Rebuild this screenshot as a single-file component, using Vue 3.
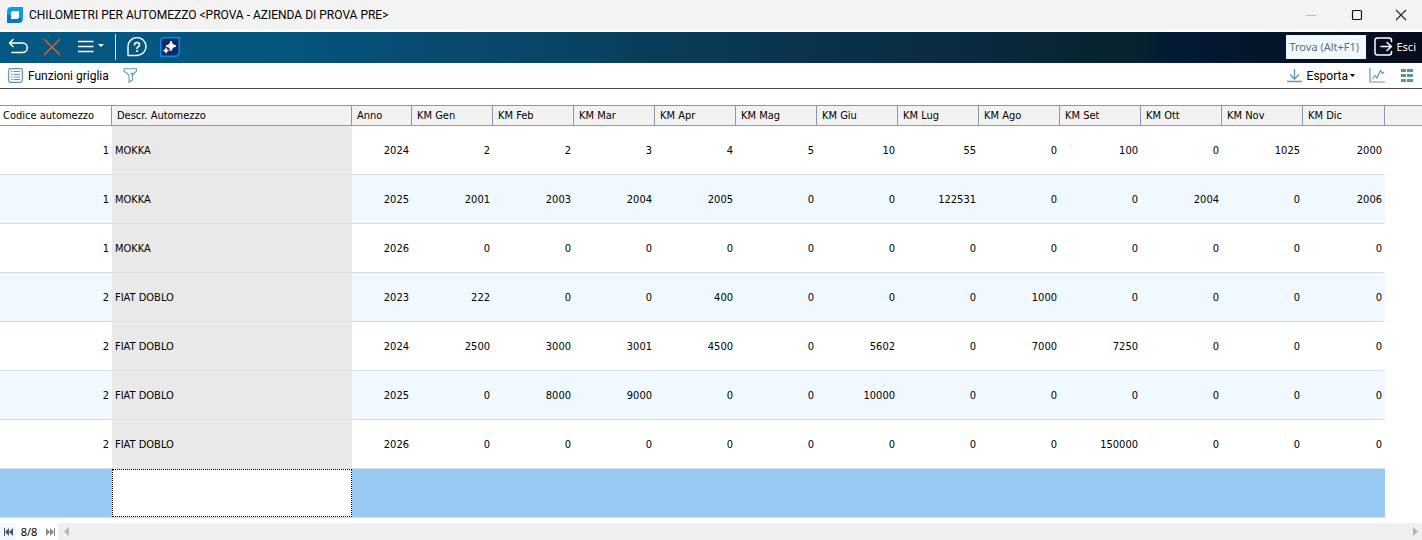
<script setup>
const months = ['Gen', 'Feb', 'Mar', 'Apr', 'Mag', 'Giu', 'Lug', 'Ago', 'Set', 'Ott', 'Nov', 'Dic']

const rows = [
  { code: 1, name: 'MOKKA', year: 2024, km: [2, 2, 3, 4, 5, 10, 55, 0, 100, 0, 1025, 2000] },
  { code: 1, name: 'MOKKA', year: 2025, km: [2001, 2003, 2004, 2005, 0, 0, 122531, 0, 0, 2004, 0, 2006] },
  { code: 1, name: 'MOKKA', year: 2026, km: [0, 0, 0, 0, 0, 0, 0, 0, 0, 0, 0, 0] },
  { code: 2, name: 'FIAT DOBLO', year: 2023, km: [222, 0, 0, 400, 0, 0, 0, 1000, 0, 0, 0, 0] },
  { code: 2, name: 'FIAT DOBLO', year: 2024, km: [2500, 3000, 3001, 4500, 0, 5602, 0, 7000, 7250, 0, 0, 0] },
  { code: 2, name: 'FIAT DOBLO', year: 2025, km: [0, 8000, 9000, 0, 0, 10000, 0, 0, 0, 0, 0, 0] },
  { code: 2, name: 'FIAT DOBLO', year: 2026, km: [0, 0, 0, 0, 0, 0, 0, 0, 150000, 0, 0, 0] },
]
</script>

<template>
  <div class="window">
    <header class="titlebar">
      <svg class="logo" width="16" height="16" viewBox="0 0 16 16" aria-hidden="true">
        <path d="M4 0H16V11Q16 16 11 16H0V5Q0 0 4 0Z" fill="#0d9fdc" />
        <path d="M0 8V16H11Q14 16 15.500 13L9 9Z" fill="#0877c4" />
        <path d="M6 4H12V9.500Q12 12 9.500 12H4V6.500Q4 4 6 4Z" fill="#fff" />
      </svg>
      <h1>CHILOMETRI PER AUTOMEZZO &lt;PROVA - AZIENDA DI PROVA PRE&gt;</h1>
      <button class="win" aria-label="Riduci a icona">
        <svg width="12" height="12" viewBox="0 0 12 12"><path d="M1 6.500H11" stroke="#bdbdbd" /></svg>
      </button>
      <button class="win" aria-label="Ingrandisci">
        <svg width="12" height="12" viewBox="0 0 12 12"><rect x="1.500" y="1.500" width="9" height="9" rx="1" fill="none" stroke="#111" stroke-width="1.200" /></svg>
      </button>
      <button class="win" aria-label="Chiudi">
        <svg width="12" height="12" viewBox="0 0 12 12"><path d="M1 1L11 11M11 1L1 11" stroke="#222" stroke-width="1.100" /></svg>
      </button>
    </header>

    <nav class="toolbar">
      <button aria-label="Annulla">
        <svg width="20" height="18" viewBox="0 0 20 18" fill="none" stroke="#fff" stroke-width="1.500" stroke-linecap="round" stroke-linejoin="round"><path d="M5 1.500L1.500 5L5 8.500M2 5H14.500A4.700 4.700 0 0 1 14.500 14.500H4" /></svg>
      </button>
      <button class="delete" aria-label="Elimina">
        <svg width="18" height="18" viewBox="0 0 18 18" fill="none" stroke="#d0632f" stroke-width="1.500"><path d="M1 1L17 17M17 1L1 17" /></svg>
      </button>
      <button class="menu" aria-label="Menu">
        <svg width="26" height="18" viewBox="0 0 26 18"><path d="M0 3.500H15.500M0 8.500H15.500M0 13.500H15.500" stroke="#fff" stroke-width="1.500" /><path d="M20 6H26L23 9Z" fill="#fff" /></svg>
      </button>
      <span class="divider"></span>
      <button class="help" aria-label="Aiuto">
        <svg width="20" height="20" viewBox="0 0 20 20" fill="none" stroke="#fff" stroke-width="1.400" stroke-linecap="round"><path d="M1 10A9 9 0 1 1 10 18.500H1.500Q1 18.500 1 18Z" /><path d="M7.500 8Q7.500 5.500 10 5.500T12.500 7.800Q12.500 9.300 11 9.900Q10 10.400 10 11.500" stroke-width="1.600" /><circle cx="10" cy="14" r=".6" fill="#fff" stroke-width=".8" /></svg>
      </button>
      <button class="assistant" aria-label="Assistente">
        <svg width="20" height="20" viewBox="0 0 20 20"><path d="M4.500 .8H19.200V15Q19.200 19.200 15 19.200H.8V5Q.8 .8 4.500 .8Z" fill="#0a2a6c" stroke="#0d8bdc" stroke-width="1.500" /><path d="M11 4Q11.600 8.400 16 9Q11.600 9.600 11 14Q10.400 9.600 6 9Q10.400 8.400 11 4Z" fill="#fff" stroke="#fff" stroke-width="1" /><path d="M6 10.500Q6.400 13.100 9 13.500Q6.400 13.900 6 16.500Q5.600 13.900 3 13.500Q5.600 13.100 6 10.500Z" fill="#fff" stroke="#fff" stroke-width=".4" /></svg>
      </button>
      <input class="search" type="text" placeholder="Trova (Alt+F1)" aria-label="Trova (Alt+F1)" />
      <button class="exit">
        <svg width="19" height="19" viewBox="0 0 19 19" fill="none" stroke="#fff" stroke-width="1.500" stroke-linecap="round" stroke-linejoin="round"><path d="M17.500 4.500V3.500Q17.500 1 15 1H3.500Q1 1 1 3.500V15.500Q1 18 3.500 18H15Q17.500 18 17.500 15.500V14.500M7 9.500H17.500M13 5.500L17.500 9.500L13 13.500" /></svg>
        Esci
      </button>
    </nav>

    <div class="gridbar">
      <button>
        <svg width="15" height="15" viewBox="0 0 15 15" fill="none" stroke="#5b93b0"><rect x=".7" y=".7" width="13.600" height="13.600" rx="1.500" stroke-width="1.200" /><path d="M3 3.500H4.500M3 6.500H4.500M3 9H4.500M3 11.500H4.500M5.500 3.500H12M5.500 6.500H12M5.500 9H12M5.500 11.500H12" /></svg>
        Funzioni griglia
      </button>
      <button class="filter" aria-label="Filtro">
        <svg width="15" height="15" viewBox="0 0 15 15" fill="none" stroke="#5b9cc0" stroke-width="1.100" stroke-linejoin="round"><path d="M1 .8H13.500V3L9.500 7V12L6 14.300V7L1 3Z" /><path d="M7.500 5.500H11M9 5.500V8" /></svg>
      </button>
      <button class="export">
        <svg width="15" height="15" viewBox="0 0 15 15" fill="none" stroke="#5b9ab5" stroke-width="1.400"><path d="M7.500 1V10.500M3 6.500L7.500 11L12 6.500M0 13.500H15" /></svg>
        Esporta
        <svg class="caret" width="5" height="3" viewBox="0 0 5 3"><path d="M0 0H5L2.500 3Z" fill="#000" /></svg>
      </button>
      <button class="chart" aria-label="Grafico">
        <svg width="16" height="15" viewBox="0 0 16 15" fill="none" stroke="#5b9ab5" stroke-width="1.200"><path d="M1 0V14H16M3.500 11L6 7.500L8 10L11.500 2.500L13.500 5.500L15 4" /></svg>
      </button>
      <button class="tiles" aria-label="Colonne">
        <svg width="12" height="13" viewBox="0 0 12 13" fill="#5b93ab"><path d="M0 0H5V3H0ZM6 0H12V3H6ZM0 5H5V8H0ZM6 5H12V8H6ZM0 10H5V13H0ZM6 10H12V13H6Z" /></svg>
      </button>
    </div>

    <main>
      <table>
        <colgroup>
          <col class="c-code" /><col class="c-name" /><col class="c-year" />
          <col v-for="m in months" :key="m" class="c-km" />
          <col />
        </colgroup>
        <thead>
          <tr>
            <th class="active" scope="col">Codice automezzo</th>
            <th scope="col">Descr. Automezzo</th>
            <th scope="col">Anno</th>
            <th v-for="m in months" :key="m" scope="col">KM {{ m }}</th>
            <td></td>
          </tr>
        </thead>
        <tbody>
          <tr v-for="(r, i) in rows" :key="i">
            <td>{{ r.code }}</td>
            <td class="name">{{ r.name }}</td>
            <td>{{ r.year }}</td>
            <td v-for="(k, j) in r.km" :key="j">{{ k }}</td>
            <td class="rest"></td>
          </tr>
          <tr class="selected">
            <td></td>
            <td class="edit"><input type="text" aria-label="Descr. Automezzo" /></td>
            <td></td>
            <td v-for="m in months" :key="m"></td>
            <td class="rest"></td>
          </tr>
        </tbody>
      </table>
    </main>

    <footer>
      <button class="first" aria-label="Primo record">
        <svg width="9" height="8" viewBox="0 0 9 8" fill="#48566e"><path d="M0 0H1V8H0ZM5 0V8L1 4ZM9 0V8L5 4Z" /></svg>
      </button>
      <span class="position">8/8</span>
      <button class="last" aria-label="Ultimo record">
        <svg width="9" height="8" viewBox="0 0 9 8" fill="#8b8b8b"><path d="M8 0H9V8H8ZM0 0V8L4 4ZM4 0V8L8 4Z" /></svg>
      </button>
      <div class="scroll">
        <button aria-label="Scorri a sinistra"><svg width="5" height="9" viewBox="0 0 5 9"><path d="M5 0V9L0 4.500Z" fill="#b4b8c2" /></svg></button>
        <button aria-label="Scorri a destra"><svg width="5" height="9" viewBox="0 0 5 9"><path d="M0 0V9L5 4.500Z" fill="#b0b4be" /></svg></button>
      </div>
    </footer>
  </div>
</template>

<style>
body { margin: 0; background: #fff; }
</style>

<style scoped>
.window {
  display: flex;
  flex-direction: column;
  min-height: 100vh;
  color: #000;
  background: #fff;
  font-family: Roboto, "Open Sans", sans-serif;
  font-size: 12px;
  overflow: hidden;
}
button {
  display: flex;
  align-items: center;
  justify-content: center;
  padding: 0;
  border: 0;
  background: none;
  color: inherit;
  font: inherit;
  white-space: nowrap;
}
svg { display: block; flex: none; }

.titlebar {
  display: flex;
  align-items: center;
  height: 30px;
  flex: none;
  padding-left: 7px;
  margin-bottom: 2px;
  background: #f3f3f3;
}
h1 {
  flex: 1;
  margin: 0 0 0 6px;
  font-size: 12px;
  font-weight: 400;
  line-height: 16px;
  white-space: nowrap;
}
.win { width: 46px; height: 28px; }
.win:last-child { width: 42px; }

.toolbar {
  display: flex;
  align-items: center;
  height: 31px;
  flex: none;
  box-sizing: border-box;
  padding: 0 6px 2px 8px;
  color: #fff;
  background: linear-gradient(90deg, #045a85 0%, #04557e 20%, #0a4566 38%, #083851 52%, #092c43 66%, #07222f 80%, #021b35 82%, #05152a 90%, #080b1b 100%);
}
.delete { margin-left: 15px; }
.menu { margin-left: 17px; }
.divider { width: 1px; height: 26px; margin: 0 11px; background: #d5e2ea; }
.assistant { margin-left: 13px; }
.search {
  box-sizing: border-box;
  width: 80px;
  height: 24px;
  margin-left: auto;
  padding: 0 3px;
  border: 0;
  background: #f0f9ff;
  color: #333;
  font: 11px "Noto Sans", "Open Sans", sans-serif;
}
.search::placeholder { color: #5f6e78; opacity: 1; }
.exit { gap: 3px; margin-left: 8px; font: 11px "Noto Sans", "Open Sans", sans-serif; }

.gridbar {
  display: flex;
  align-items: center;
  height: 25px;
  flex: none;
  padding: 0 9px 0 8px;
  border-bottom: 1px solid #4a4a4a;
}
.gridbar button { gap: 5px; }
.gridbar .filter { margin-left: 14px; }
.gridbar .export { margin-left: auto; }
.gridbar .caret { margin-left: -3px; }
.chart { margin-left: 14px; }
.tiles { margin-left: 16px; }

main { flex: 1; padding-top: 16px; }
table {
  width: 100%;
  table-layout: fixed;
  border-collapse: separate;
  border-spacing: 0;
  font-family: "DejaVu Sans Condensed", "DejaVu Sans", sans-serif;
  font-size: 11px;
  line-height: 14px;
}
.c-code { width: 112px; }
.c-name { width: 240px; }
.c-year { width: 60px; }
.c-km { width: 81px; }
.c-km:nth-child(15) { width: 82px; }
thead th, thead td {
  box-sizing: border-box;
  height: 21px;
  padding: 0 0 0 5px;
  border: solid #8499b5;
  border-width: 1px 1px 1px 0;
  background: #f2f2f2;
  font-weight: 400;
  text-align: left;
  white-space: nowrap;
}
thead td { border-right: 0; }
thead .active { padding-left: 3px; background: #fff; }
tbody td {
  box-sizing: border-box;
  height: 49px;
  padding: 2px 3px 0 3px;
  border-bottom: 1px solid #d9dcde;
  text-align: right;
}
tbody tr:nth-child(even) td { background: #f0f9ff; }
tbody tr .name, tbody tr:nth-child(even) .name { background: #e9e9e9; border-color: #dfe0e1; text-align: left; }
tbody tr.selected td { background: #99caf4; }
tbody tr td.rest, tbody tr:nth-child(even) td.rest, tbody tr.selected td.rest { border: 0; background: #fff; }
tbody tr.selected .edit { padding: 0; }
.edit input {
  display: block;
  box-sizing: border-box;
  width: 100%;
  height: 48px;
  border: 1px dotted #000;
  border-radius: 0;
  background: #fff;
}

footer {
  display: flex;
  align-items: center;
  height: 17px;
  flex: none;
  margin-top: 5px;
}
.first { width: 16px; height: 17px; background: #f0f9ff; }
.position { width: 26px; font: 11px/17px "Noto Sans", "Open Sans", sans-serif; text-align: center; }
.last { width: 16px; }
.scroll {
  display: flex;
  flex: 1;
  align-items: center;
  justify-content: space-between;
  height: 17px;
  padding: 0 4px 0 6px;
  background: #efefef;
}
</style>
